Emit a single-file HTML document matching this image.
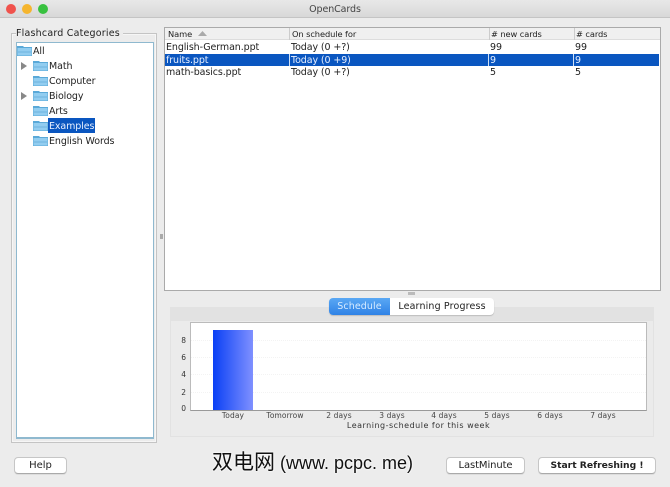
<!DOCTYPE html>
<html><head><meta charset="utf-8"><style>
*{box-sizing:border-box}
html,body{margin:0;padding:0;width:670px;height:487px;overflow:hidden;background:#ececec;font-family:"Liberation Sans","DejaVu Sans",sans-serif;color:#222}
.a{position:absolute}
.t{position:absolute;margin-top:1px;white-space:nowrap;font-size:9.5px;line-height:12px;letter-spacing:-.1px;font-family:"DejaVu Sans",sans-serif}
.btn{position:absolute;background:#fff;border:1px solid #c6c6c6;border-bottom-color:#aaa;border-radius:4px;text-align:center;font-size:10px;line-height:16px;height:17px;font-family:"DejaVu Sans",sans-serif;box-shadow:0 1px 0 #ddd}
.x{position:absolute;top:411px;font-size:7.5px;line-height:10px;color:#444;width:60px;text-align:center;font-family:"DejaVu Sans",sans-serif;letter-spacing:.1px}
.y{position:absolute;left:174px;width:12px;text-align:right;font-size:7.5px;line-height:8px;color:#333;font-family:"DejaVu Sans",sans-serif}
.g{position:absolute;left:191px;width:455px;height:0;border-top:1px dotted #f3f3f3}
svg.f{position:absolute;width:15px;height:12px}
</style></head><body>
<div class="a" style="left:0;top:0;width:670px;height:18px;background:linear-gradient(#e8e8e8,#d8d8d8);border-bottom:1px solid #c4c4c4"></div>
<div class="a" style="left:6px;top:4px;width:10px;height:10px;border-radius:50%;background:#f0524c"></div>
<div class="a" style="left:22px;top:4px;width:10px;height:10px;border-radius:50%;background:#f5b52e"></div>
<div class="a" style="left:38px;top:4px;width:10px;height:10px;border-radius:50%;background:#38c13f"></div>
<div class="t" style="left:0;width:670px;text-align:center;top:3px;color:#444">OpenCards</div>

<div class="a" style="left:11px;top:33px;width:146px;height:410px;border:1px solid #c4c4c4;box-shadow:inset 0 0 0 1px #f6f6f6"></div>
<div class="t" style="left:16px;top:27px;background:#ececec;padding:0 3px 0 0;font-size:9.5px;letter-spacing:.2px">Flashcard Categories</div>
<div class="a" style="left:16px;top:42px;width:138px;height:397px;background:#fff;border:1px solid #8fb9cf;border-bottom:2px solid #8fb9cf"></div>

<svg width="0" height="0" style="position:absolute"><defs><g id="fo"><path d="M0 2h6l1 1h8v9H0z" fill="#5aa9d8"/><path d="M0.500 4h14v7.500h-14z" fill="#92cdf0"/><path d="M1 8h13" stroke="#6fb4de"/></g></defs></svg>
<svg class="f" style="left:17px;top:44px"><use href="#fo"/></svg>
<svg class="f" style="left:33px;top:59px"><use href="#fo"/></svg>
<svg class="f" style="left:33px;top:74px"><use href="#fo"/></svg>
<svg class="f" style="left:33px;top:89px"><use href="#fo"/></svg>
<svg class="f" style="left:33px;top:104px"><use href="#fo"/></svg>
<svg class="f" style="left:33px;top:119px"><use href="#fo"/></svg>
<svg class="f" style="left:33px;top:134px"><use href="#fo"/></svg>
<svg class="a" style="left:20px;top:62px" width="8" height="8"><path d="M1 0l6 4-6 4z" fill="#888"/></svg>
<svg class="a" style="left:20px;top:92px" width="8" height="8"><path d="M1 0l6 4-6 4z" fill="#888"/></svg>
<div class="t" style="left:33px;top:45px">All</div>
<div class="t" style="left:49px;top:60px">Math</div>
<div class="t" style="left:49px;top:75px">Computer</div>
<div class="t" style="left:49px;top:90px">Biology</div>
<div class="t" style="left:49px;top:105px">Arts</div>
<div class="a" style="left:48px;top:118px;width:47px;height:15px;background:#0a56c0"></div>
<div class="t" style="left:49px;top:120px;color:#e8f0ff">Examples</div>
<div class="t" style="left:49px;top:135px">English Words</div>

<div class="a" style="left:160px;top:234px;width:3px;height:5px;background:#aaa"></div>

<div class="a" style="left:164px;top:27px;width:497px;height:264px;background:#fff;border:1px solid #aaa"></div>
<div class="a" style="left:165px;top:28px;width:495px;height:12px;background:#f0f0f0;border-bottom:1px solid #ddd"></div>
<div class="a" style="left:289px;top:28px;width:1px;height:12px;background:#ccc"></div>
<div class="a" style="left:489px;top:28px;width:1px;height:12px;background:#ccc"></div>
<div class="a" style="left:574px;top:28px;width:1px;height:12px;background:#ccc"></div>
<div class="t" style="left:168px;top:27px;font-size:8.3px">Name</div>
<svg class="a" style="left:198px;top:31px" width="9" height="5"><path d="M0 5L4.500 0 9 5z" fill="#aaa"/></svg>
<div class="t" style="left:292px;top:27px;font-size:8.3px">On schedule for</div>
<div class="t" style="left:491px;top:27px;font-size:8.3px"># new cards</div>
<div class="t" style="left:576px;top:27px;font-size:8.3px"># cards</div>

<div class="t" style="left:166px;top:41px">English-German.ppt</div>
<div class="t" style="left:291px;top:41px">Today (0 +?)</div>
<div class="t" style="left:490px;top:41px">99</div>
<div class="t" style="left:575px;top:41px">99</div>

<div class="a" style="left:165px;top:54px;width:494px;height:12px;background:#0a56c0"></div>
<div class="a" style="left:289px;top:54px;width:1px;height:12px;background:#cfe0f5"></div>
<div class="a" style="left:488px;top:54px;width:1px;height:12px;background:#cfe0f5"></div>
<div class="a" style="left:573px;top:54px;width:1px;height:12px;background:#cfe0f5"></div>
<div class="t" style="left:166px;top:54px;color:#e8f0ff">fruits.ppt</div>
<div class="t" style="left:291px;top:54px;color:#e8f0ff">Today (0 +9)</div>
<div class="t" style="left:490px;top:54px;color:#e8f0ff">9</div>
<div class="t" style="left:575px;top:54px;color:#e8f0ff">9</div>

<div class="t" style="left:166px;top:66px">math-basics.ppt</div>
<div class="t" style="left:291px;top:66px">Today (0 +?)</div>
<div class="t" style="left:490px;top:66px">5</div>
<div class="t" style="left:575px;top:66px">5</div>

<div class="a" style="left:408px;top:292px;width:7px;height:3px;background:#bbb"></div>

<div class="a" style="left:170px;top:307px;width:484px;height:130px;background:#ebebeb;border:1px solid #e2e2e2;border-top:14px solid #e2e2e2"></div>
<div class="a" style="left:329px;top:298px;width:165px;height:17px;border-radius:4px;background:#fff;box-shadow:0 1px 1px #bbb"></div>
<div class="a" style="left:329px;top:298px;width:61px;height:17px;border-radius:4px 0 0 4px;background:linear-gradient(#5aa8f4,#2f82e6)"></div>
<div class="t" style="left:329px;width:61px;text-align:center;top:300px;color:#d8ecff;font-size:9.5px;letter-spacing:.1px">Schedule</div>
<div class="t" style="left:390px;width:104px;text-align:center;top:300px;font-size:9.5px;letter-spacing:.15px">Learning Progress</div>

<div class="a" style="left:190px;top:322px;width:457px;height:89px;background:#fff;border:1px solid #bbb;border-bottom:1px solid #999"></div>
<div class="g" style="top:340px"></div><div class="g" style="top:357px"></div><div class="g" style="top:374px"></div><div class="g" style="top:392px"></div>
<div class="a" style="left:213px;top:330px;width:40px;height:80px;background:linear-gradient(90deg,#0a40f5,#7f90ff)"></div>
<div class="y" style="top:337px">8</div>
<div class="y" style="top:354px">6</div>
<div class="y" style="top:371px">4</div>
<div class="y" style="top:389px">2</div>
<div class="y" style="top:405px">0</div>
<div class="x" style="left:203px">Today</div>
<div class="x" style="left:255px">Tomorrow</div>
<div class="x" style="left:309px">2 days</div>
<div class="x" style="left:362px">3 days</div>
<div class="x" style="left:414px">4 days</div>
<div class="x" style="left:467px">5 days</div>
<div class="x" style="left:520px">6 days</div>
<div class="x" style="left:573px">7 days</div>
<div class="t" style="left:190px;width:457px;text-align:center;top:420px;font-size:8px;letter-spacing:.5px;line-height:10px;color:#333">Learning-schedule for this week</div>

<div class="btn" style="left:14px;top:457px;width:53px">Help</div>
<div class="btn" style="left:446px;top:457px;width:79px;letter-spacing:-.1px">LastMinute</div>
<div class="btn" style="left:538px;top:457px;width:118px;font-weight:bold;font-size:9.2px">Start Refreshing !</div>

<div class="a" style="left:212px;top:451px;white-space:nowrap;font-size:18px;line-height:24px;color:#111;text-shadow:0 0 2px #fff,0 0 2px #fff;font-family:'Liberation Sans','Noto Sans CJK SC',sans-serif"><span style="font-size:21px">双电网</span> (www. pcpc. me)</div>
</body></html>
